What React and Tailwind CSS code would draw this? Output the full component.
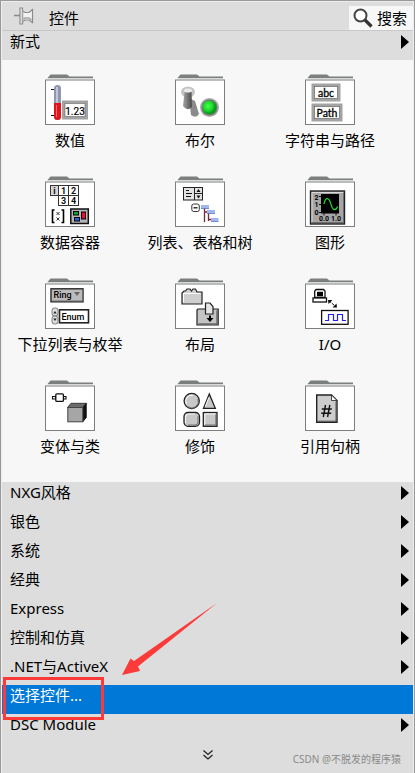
import React from 'react';

const CATEGORIES = [
  { label: '数值', Icon: NumericIcon },
  { label: '布尔', Icon: BooleanIcon },
  { label: '字符串与路径', Icon: StringIcon },
  { label: '数据容器', Icon: ContainerIcon },
  { label: '列表、表格和树', Icon: ListIcon },
  { label: '图形', Icon: GraphIcon },
  { label: '下拉列表与枚举', Icon: RingIcon },
  { label: '布局', Icon: LayoutIcon },
  { label: 'I/O', Icon: IoIcon },
  { label: '变体与类', Icon: VariantIcon },
  { label: '修饰', Icon: DecorationIcon },
  { label: '引用句柄', Icon: RefnumIcon },
];

const MENU = ['NXG风格', '银色', '系统', '经典', 'Express', '控制和仿真', '.NET与ActiveX'];

// Every palette icon sits inside the same folder outline
function Folder({ children }) {
  return (
    <svg viewBox="0 0 50 51" className="w-[50px] h-[51px] shrink-0" fontFamily="Roboto, sans-serif" aria-hidden="true">
      <path d="M2.5 4 L5.5 0.5 H22 L24.5 2.5 H48 V4.2 H2.5 Z" fill="#7b7f7e" />
      <rect x="0.5" y="6" width="49" height="44.5" fill="#fff" stroke="#7b7f7e" />
      {children}
    </svg>
  );
}

function NumericIcon() {
  return (
    <Folder>
      <path d="M6 15.5 H9 M6 41.5 H9" stroke="#111" />
      <rect x="9" y="11" width="7" height="35" rx="3.5" fill="#8f96ad" />
      <rect x="11" y="13" width="2" height="16" fill="#c3c8d8" />
      <path d="M9 29 H16 V42.5 A3.5 3.5 0 0 1 9 42.5 Z" fill="#e3131b" />
      <path d="M11.5 31 V43" stroke="#ff6a6a" />
      <rect x="18.5" y="28" width="23" height="16" fill="#fff" stroke="#a3a3a3" strokeWidth="3" />
      <rect x="20" y="29.5" width="20" height="13" fill="none" stroke="#666" strokeWidth="0.6" />
      <text x="30" y="40.5" fontSize="10" textAnchor="middle" fill="#000" stroke="#000" strokeWidth="0.2">1.23</text>
    </Folder>
  );
}

function BooleanIcon() {
  return (
    <Folder>
      <defs>
        <linearGradient id="lever" x1="0" x2="1">
          <stop offset="0" stopColor="#a5a5a5" />
          <stop offset="1" stopColor="#4a4a4a" />
        </linearGradient>
        <radialGradient id="led" cx="0.4" cy="0.4">
          <stop offset="0" stopColor="#4dff4d" />
          <stop offset="0.7" stopColor="#17d62a" />
          <stop offset="1" stopColor="#0b9c1c" />
        </radialGradient>
      </defs>
      <path d="M14 24 L20 27 L24 40 Q21 45 16 41 Z" fill="#8b8b8b" />
      <ellipse cx="13" cy="18" rx="7" ry="5.5" fill="#c4c4c4" />
      <path d="M9.5 18 Q13 14 16.5 18 L17 33 Q12 38 8 32 Z" fill="url(#lever)" />
      <ellipse cx="13" cy="16.5" rx="4" ry="2" fill="#ececec" />
      <circle cx="34.5" cy="33.5" r="9.5" fill="#aaa" />
      <circle cx="34.5" cy="33.5" r="8" fill="#777" />
      <circle cx="34.5" cy="33.5" r="7" fill="url(#led)" />
    </Folder>
  );
}

function StringIcon() {
  return (
    <Folder>
      <rect x="8" y="11" width="26" height="15" fill="#fff" stroke="#a3a3a3" strokeWidth="3" />
      <rect x="9.5" y="12.5" width="23" height="12" fill="none" stroke="#555" strokeWidth="0.6" />
      <text x="21" y="22.5" fontSize="10.5" fontFamily="Lato, sans-serif" textAnchor="middle" fill="#000" stroke="#000" strokeWidth="0.3">abc</text>
      <rect x="8" y="31" width="28" height="15" fill="#fff" stroke="#a3a3a3" strokeWidth="3" />
      <rect x="9.5" y="32.5" width="25" height="12" fill="none" stroke="#555" strokeWidth="0.6" />
      <text x="22" y="43" fontSize="10.5" fontFamily="Lato, sans-serif" textAnchor="middle" fill="#000" stroke="#000" strokeWidth="0.3">Path</text>
    </Folder>
  );
}

function ContainerIcon() {
  return (
    <Folder>
      <g fill="#fff" stroke="#333">
        <rect x="5.5" y="9.5" width="8" height="10" fill="#d6d6d6" />
        <rect x="13.5" y="9.5" width="10" height="10" />
        <rect x="23.5" y="9.5" width="10" height="10" />
        <rect x="13.5" y="19.5" width="10" height="10" />
        <rect x="23.5" y="19.5" width="10" height="10" />
      </g>
      <g fontSize="9" fontWeight="700" textAnchor="middle" fill="#111">
        <text x="9.5" y="18">i</text>
        <text x="18.5" y="18">1</text>
        <text x="28.5" y="18">2</text>
        <text x="18.5" y="28">3</text>
        <text x="28.5" y="28">4</text>
      </g>
      <path d="M9.5 34 H7.5 V46.5 H9.5 M16.5 34 H18.5 V46.5 H16.5" fill="none" stroke="#000" strokeWidth="1.6" />
      <path d="M11.5 36 L14.5 39 M14.5 36 L11.5 39 M11.5 41.5 L14.5 44.5 M14.5 41.5 L11.5 44.5" stroke="#222" strokeWidth="0.9" />
      <rect x="25.8" y="33" width="17.5" height="14.5" fill="#b5b5b5" stroke="#111" strokeWidth="1.5" />
      <rect x="28.5" y="35.5" width="5" height="3.5" fill="#11a52b" stroke="#000" />
      <rect x="29.5" y="41.5" width="5" height="3.5" fill="#1667e6" stroke="#000" />
      <rect x="36.5" y="36" width="4" height="7" fill="#e6122d" stroke="#000" />
    </Folder>
  );
}

function ListIcon() {
  return (
    <Folder>
      <rect x="8.5" y="11.5" width="19" height="12.5" fill="#e4e4e4" stroke="#222" />
      <path d="M11 14.5 H14 M11 17.5 H17 M11 20.5 H16" stroke="#111" />
      <path d="M19.5 11.5 V24 M19.5 17.5 H27.5" stroke="#222" />
      <path d="M21.5 16 L23.5 13 L25.5 16 Z M21.5 19.5 H25.5 L23.5 22.5 Z" fill="#111" />
      <rect x="16.8" y="28" width="7.5" height="7.5" rx="2" fill="#fff" stroke="#333" />
      <path d="M18.5 31.8 H22.5" stroke="#111" strokeWidth="1.3" />
      <path d="M29.5 32 V46 M29.5 36 H33 M33.5 36 V45 M33.5 43.5 H37" fill="none" stroke="#7a2733" strokeWidth="1.3" />
      <g fill="#9fb6ee">
        <rect x="26" y="29" width="8" height="3.5" />
        <rect x="32" y="34" width="8" height="3.5" />
        <rect x="36" y="42" width="7.5" height="3.5" />
      </g>
      <path d="M26 32.5 H34 M32 37.5 H40 M36 45.5 H43.5" stroke="#5b74c4" strokeWidth="0.8" />
    </Folder>
  );
}

function GraphIcon() {
  return (
    <Folder>
      <rect x="5.5" y="15" width="34" height="33" fill="#a6a6a6" stroke="#222" strokeWidth="1.4" />
      <path d="M7 46 V16.5 H38" fill="none" stroke="#dadada" />
      <path d="M7 46.5 H38.5 V17" fill="none" stroke="#6d6d6d" />
      <rect x="16" y="18" width="18" height="19.5" fill="#000" />
      <path d="M14 20.5 H16 M14 28.5 H16 M14 36.5 H16 M19 37 V39.5 M31 37 V39.5" stroke="#111" />
      <path d="M19 28 Q20 22.6 22.3 22.6 Q24.5 22.6 26 28.3 Q27.5 33.6 29.5 33.6 Q31.5 33.6 32.6 30.5" fill="none" stroke="#18e02c" strokeWidth="1.2" />
      <g fontSize="7" fontWeight="700" fill="#000">
        <text x="9.5" y="23.5">2</text>
        <text x="9.5" y="31">1</text>
        <text x="9.5" y="39">0</text>
        <text x="14" y="45">0.0</text>
        <text x="26" y="45">1.0</text>
      </g>
    </Folder>
  );
}

function RingIcon() {
  return (
    <Folder>
      <rect x="6" y="10.8" width="32" height="13" fill="#bcbcbc" stroke="#333" strokeWidth="1.5" />
      <path d="M7 23 H37.5 V11.5" fill="none" stroke="#6f6f6f" />
      <text x="8.5" y="20.3" fontSize="9" fontWeight="500" fill="#000">Ring</text>
      <path d="M29 14 H35 L32 18 Z" fill="#666" />
      <rect x="14.5" y="31.8" width="29" height="13" fill="#fff" stroke="#222" strokeWidth="1.6" />
      <text x="16.5" y="42" fontSize="9" fontWeight="500" fill="#000">Enum</text>
      <rect x="7" y="30" width="6" height="8" rx="2.5" fill="#ddd" stroke="#777" />
      <rect x="7" y="38" width="6" height="8" rx="2.5" fill="#ddd" stroke="#777" />
      <path d="M8.3 35.5 L10 33 L11.7 35.5 Z M8.3 40.5 H11.7 L10 43 Z" fill="#222" />
    </Folder>
  );
}

function LayoutIcon() {
  return (
    <Folder>
      <path d="M7 26 V15 L9 13 H10.5 L12 11 H15 L16.5 13 L18 11 H20.5 L22 14 H27 V26 Z" fill="#cfcfcf" stroke="#222" strokeWidth="1.2" />
      <path d="M8.5 24.5 V15.5 H25.5" fill="none" stroke="#fff" />
      <path d="M22 47 V32 L23 31 H43.2 V47 Z" fill="#c4c4c4" stroke="#222" strokeWidth="1.2" />
      <path d="M23.5 46 H42 V32.5" fill="none" stroke="#666" strokeWidth="1.4" />
      <path d="M30.5 36 V25 H35 L38 28.5 V36 Z" fill="#e6e6e6" stroke="#222" strokeWidth="1.2" />
      <path d="M34 37.5 H36 V40 H38.5 L35 44 L31.5 40 H34 Z" fill="#000" />
    </Folder>
  );
}

function IoIcon() {
  return (
    <Folder>
      <path d="M9.7 19.5 V13 L11.2 11.5 H18.5 L20 13 V19.5 Z" fill="#fff" stroke="#111" strokeWidth="1.3" />
      <rect x="12" y="13.8" width="6" height="4.5" fill="#000" />
      <rect x="8" y="20" width="13.5" height="4" fill="#fff" stroke="#111" strokeWidth="1.3" />
      <path d="M24 22.8 L31 28.8" stroke="#111" strokeDasharray="3 1" />
      <path d="M23 22 H27.5 L23.5 26 Z M32 29.6 H27.5 L31.5 25.6 Z" fill="#111" />
      <rect x="16.6" y="32.5" width="26.5" height="13.8" fill="#fff" stroke="#111" strokeWidth="1.3" />
      <path d="M20 42.5 H23.5 V36.5 H28.5 V42.5 H32.5 V36.5 H37.5 V42.5 H41" fill="none" stroke="#2222ee" strokeWidth="1.2" />
    </Folder>
  );
}

function VariantIcon() {
  return (
    <Folder>
      <path d="M7.5 16.5 H10.5 V19 H7.5 Z M18.5 16.5 H21 V19 H18.5 Z" fill="#fff" stroke="#111" strokeWidth="1.1" />
      <rect x="10.8" y="13.8" width="7.6" height="7.6" rx="1" fill="#fff" stroke="#111" strokeWidth="1.3" />
      <path d="M22.5 27.5 L26 23.3 H41.3 L37.8 27.5 Z" fill="#6b6b6b" stroke="#222" strokeWidth="0.8" />
      <path d="M37.8 27.5 L41.3 23.3 V37.5 L37.8 41.8 Z" fill="#111" stroke="#111" strokeWidth="0.8" />
      <rect x="22.8" y="27.5" width="15" height="14.3" fill="#a6a6a6" stroke="#444" />
    </Folder>
  );
}

function DecorationIcon() {
  return (
    <Folder>
      <g fill="#c8c8c8" stroke="#222" strokeWidth="1.3">
        <circle cx="16.7" cy="21" r="7.6" />
        <path d="M34.3 14 L40.3 28.3 H28.5 Z" />
        <rect x="9" y="32.5" width="15.5" height="13.8" rx="4" />
        <rect x="28.3" y="32.5" width="13.7" height="13.8" />
      </g>
      <path d="M11.5 24 A6 6 0 0 1 18 15.3 M33.8 17.5 L30.3 26.5 M10.5 43 V37 Q10.5 34 13.5 34 H20 M29.8 45 V34 H40.5" fill="none" stroke="#fff" strokeWidth="0.9" />
      <path d="M13 26.8 A6.5 6.5 0 0 0 22.8 19 M13 45 H20 Q23 45 23 42 V36 M30 45 H40.8 V34.5" fill="none" stroke="#6b6b6b" strokeWidth="0.9" />
    </Folder>
  );
}

function RefnumIcon() {
  return (
    <Folder>
      <path d="M11.7 15 H26.5 L32 20.5 V42.3 H11.7 Z" fill="#cdcdcd" stroke="#222" strokeWidth="1.4" />
      <path d="M26.5 15 V20.5 H32 Z" fill="#fff" stroke="#222" strokeWidth="0.8" />
      <path d="M13 41.2 H31 V21.5" fill="none" stroke="#555" />
      <path d="M20.5 25 L18.3 37 M24.8 25 L22.6 37 M16.8 29 H26.8 M16.2 33.3 H26.2" stroke="#111" strokeWidth="1.4" />
    </Folder>
  );
}

function PinIcon() {
  return (
    <svg viewBox="0 0 20 18" className="w-5 h-[18px] shrink-0" aria-hidden="true">
      <path d="M0 8.5 H6" stroke="#8b8b8b" strokeWidth="1.6" />
      <path d="M6 1 H8.5 V4 L11 5.5 H15 L18.5 2.5 V15.5 L15 13 H11 L8.5 14.5 V17 H6 Z" fill="#f2f2f2" stroke="#8b8b8b" strokeWidth="1.2" />
      <path d="M8.5 4 V14.5 M9.5 12 L11 11 H15 L17.5 13" fill="none" stroke="#a6a6a6" strokeWidth="1.6" />
    </svg>
  );
}

function SearchIcon() {
  return (
    <svg viewBox="0 0 20 20" className="w-5 h-5 shrink-0" aria-hidden="true">
      <circle cx="7.5" cy="7.5" r="6" fill="#fff" stroke="#444" strokeWidth="2" />
      <path d="M12 12 L18.5 18.5" stroke="#333" strokeWidth="3.2" />
    </svg>
  );
}

function SubmenuArrow() {
  return (
    <svg viewBox="0 0 8 14" className="w-2 h-3.5 shrink-0" aria-hidden="true">
      <path d="M0 0 L8 7 L0 14 Z" fill="#000" />
    </svg>
  );
}

function MenuRow({ label }) {
  return (
    <button type="button" className="flex items-start justify-between w-full h-[29px] pl-2 pr-1 text-left">
      <span className="leading-[21px]">{label}</span>
      <span className="pt-1">
        <SubmenuArrow />
      </span>
    </button>
  );
}

export default function App() {
  return (
    <main className="flex flex-col w-full min-h-screen border border-[#999] bg-[#ddd] text-[15px] text-black font-['Noto_Sans','Noto_Sans_CJK_SC',sans-serif]">
      <div className="flex flex-col grow border border-[#ececec]">
        {/* Title bar */}
        <header className="flex items-center h-[29px] pl-3 border-b border-[#c8c8c8]">
          <PinIcon />
          <h1 className="pl-[15px] pt-1 leading-5">控件</h1>
          <button type="button" className="flex items-center gap-1 h-6 ml-auto mt-1 pl-1 pr-1.5 bg-[#f7f7f7]">
            <SearchIcon />
            <span className="leading-5">搜索</span>
          </button>
        </header>

        <MenuRow label="新式" />

        {/* Control palette */}
        <section className="grid grid-cols-3 gap-y-[26px] pt-3.5 pb-[26px] pl-[3px] pr-[18px] bg-[#f7f7f7]">
          {CATEGORIES.map(({ label, Icon }) => (
            <button key={label} type="button" className="flex flex-col items-center gap-[5px]">
              <Icon />
              <span className="leading-5 whitespace-nowrap">{label}</span>
            </button>
          ))}
        </section>

        <nav>
          {MENU.map((label) => (
            <MenuRow key={label} label={label} />
          ))}

          {/* Highlighted entry with the red callout over it */}
          <div className="relative">
            <button type="button" className="block w-full h-[29px] pl-2 bg-[#0078d7] text-left text-white">
              <span className="block h-full leading-[21px]">选择控件...</span>
            </button>
            <span className="absolute z-10 left-px -top-2 w-[101px] h-[43px] border-[3px] border-[#fd3a3a] pointer-events-none" />
            <svg viewBox="0 0 96 73" className="absolute z-10 left-[120px] -top-[82px] w-24 h-[73px] pointer-events-none" aria-hidden="true">
              <path d="M0 72 L8.5 55.5 L12 58 L95 0 L16 63.5 L18 68 Z" fill="#fd3a3a" />
            </svg>
          </div>

          <MenuRow label="DSC Module" />
        </nav>

        <footer className="grid grid-cols-3 items-center grow pb-1.5">
          <button type="button" aria-label="展开" className="col-start-2 justify-self-center">
            <svg viewBox="0 0 10 10" className="w-2.5 h-2.5" aria-hidden="true">
              <path d="M0.5 0.5 L5 4.5 L9.5 0.5 M0.5 5 L5 9 L9.5 5" fill="none" stroke="#222" strokeWidth="1.3" />
            </svg>
          </button>
          <small className="justify-self-end pt-2 pr-3 text-[10px] leading-4 text-[#8a8a8a] whitespace-nowrap">CSDN @不脱发的程序猿</small>
        </footer>
      </div>
    </main>
  );
}
